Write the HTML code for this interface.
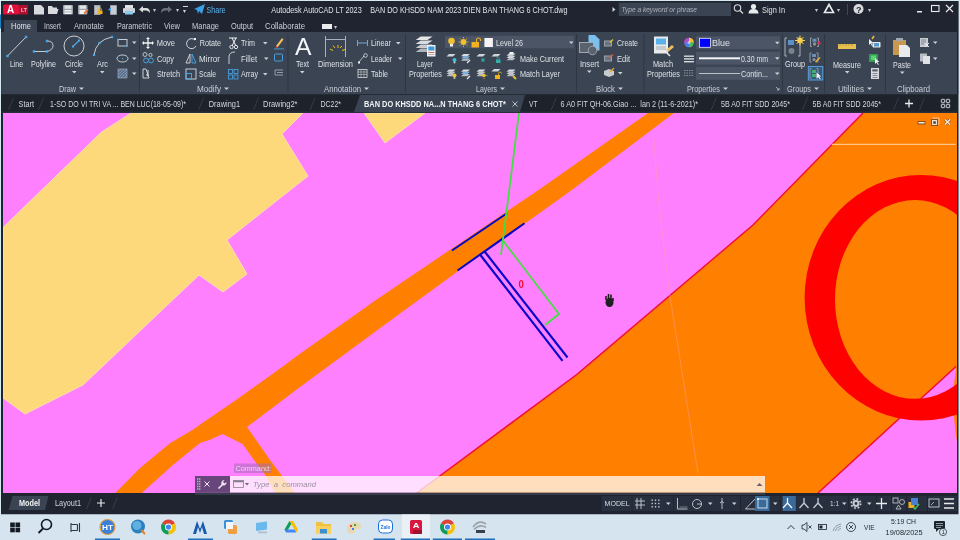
<!DOCTYPE html>
<html><head><meta charset="utf-8"><style>
html,body{margin:0;padding:0;width:960px;height:540px;overflow:hidden;background:#1f2430}
svg{display:block;will-change:transform}
text{font-family:"Liberation Sans",sans-serif;white-space:pre}
</style></head><body>
<svg width="960" height="540" viewBox="0 0 960 540">
<rect x="0" y="0" width="960" height="540" fill="#d6eaf0" />
<rect x="1" y="1" width="957.5" height="513.5" fill="#1f2430" />
<rect x="0" y="14.5" width="1.2" height="14" fill="#1a7fc0" />
<rect x="1.2" y="1" width="957" height="31" fill="#1f2430" />
<rect x="1.2" y="32" width="956" height="62.5" fill="#3b4453" />
<rect x="1.2" y="94.5" width="956" height="18.5" fill="#1d222b" />
<svg x="3" y="113" width="953.5" height="380" viewBox="3 113 953.5 380" overflow="hidden">
<rect x="0" y="100" width="960" height="400" fill="#ff80ff" />
<path d="M863,113 L753,225 L576.8,374.5 L416.8,493 L818,493 L956.5,366 L960,366 L960,113 Z" fill="#ff8000" />
<path d="M863,113 L753,225 L576.8,374.5 L416.8,493 M818,493 L956.5,366" fill="none" stroke="#f01030" stroke-width="1.5" />
<path d="M957,362 Q950,400 957,442 Z" fill="#ff8000" />
<path d="M804.6,297.75 A116.4,122.75 0 1 0 1037.4,297.75 A116.4,122.75 0 1 0 804.6,297.75 Z M835,299.4 A80,99.4 0 1 0 995,299.4 A80,99.4 0 1 0 835,299.4 Z" fill="#ff0000" fill-rule="evenodd"/>
<path d="M131,113 L303,113 L282,134 L308,176 L227,240 L247,274 L223,292 L199,275 L83,385 L25,414 L3,398 L3,227.5 L101,132.5 Z" fill="#fdd97b" stroke="#ffe8b0" stroke-width="0.8" />
<path d="M364,113 L425,113 L385,143 Z" fill="#fdd97b" stroke="#ffe8b0" stroke-width="0.8" />
<path d="M648,113 L674,113 L572.5,189.6 L460,269.8 L400,313.5 L300,387 L247,427 L270,460 L295,493 L275,493 L266,476 L254,460 L242.5,444 L222.5,434 L210,439.7 L200,443 L172.9,465 L141.8,493 L115.3,493 L140,468 L170.3,443 L192.3,430 L210,417.8 L236,400 L280,368.5 L300,353.7 L375.9,300 L435,260 L540,189 Z" fill="#ff8000" />
<path d="M653.3,133 L658.5,200 L669,290 L698,473" fill="none" stroke="#ffa0a0" stroke-width="1" opacity="0.45"/>
<path d="M452,250.5 L507,213.25 M457.5,270.5 L524.5,223.25 M480,254.5 L562.5,360.8 M485,252 L567.5,357.5" fill="none" stroke="#0808c8" stroke-width="2.1" />
<path d="M519,113 L501,255 M502.5,240 L559,314 L545,325" fill="none" stroke="#40e040" stroke-width="1.8" />
<text x="518.50" y="288.10" font-size="10" fill="#f01030" font-weight="bold" textLength="5.30" lengthAdjust="spacingAndGlyphs">0</text>
</svg>
<rect x="3" y="4.5" width="16" height="10" fill="#e0103c" rx="1.5"/>
<rect x="19" y="5" width="9" height="9.5" fill="#b0102e" />
<text x="7.00" y="13.30" font-size="10" fill="#ffffff" font-weight="bold">A</text>
<text x="21.00" y="11.50" font-size="5" fill="#f0c0c8" font-weight="bold">LT</text>
<path d="M34,5 h7 l3,3 v6.5 h-10 z" fill="#d8dadd" />
<path d="M48,6 h4 l1,1.5 h4 v2 h-9 z M48,9 h10.5 l-1.5,5 h-9 z" fill="#d8dadd" />
<rect x="63" y="5" width="10" height="9.5" fill="#9aa0a8" rx="1"/>
<rect x="64.5" y="5.5" width="7" height="3.3" fill="#e0e2e5" />
<rect x="64.5" y="10" width="7" height="4" fill="#f0f2f4" />
<rect x="65" y="11.5" width="6" height="0.8" fill="#9aa0a8" />
<rect x="78" y="5" width="9.5" height="9.5" fill="#9aa0a8" rx="1"/>
<rect x="79.5" y="5.5" width="6.5" height="3.3" fill="#e0e2e5" />
<rect x="79.5" y="10" width="6" height="4" fill="#f0f2f4" />
<path d="M84,13.5 l4,-4" fill="none" stroke="#f07030" stroke-width="1.6" />
<rect x="94" y="5" width="6.5" height="10" fill="#9aa0a8" />
<rect x="95" y="6" width="4.5" height="8" fill="#c0c4ca" />
<rect x="97.5" y="10.5" width="5" height="3.5" fill="#f0b020" />
<path d="M98.5,10.5 v-1 a1.5,1.5 0 0 1 3,0 v1" fill="none" stroke="#f0b020" stroke-width="0.8" />
<rect x="110" y="5" width="7" height="10" fill="#9aa0a8" rx="1"/>
<rect x="111" y="6" width="5" height="8" fill="#c8ccd2" />
<path d="M108,9.5 l3,-2 v4 z" fill="#4aa0e0" />
<rect x="125" y="5" width="8" height="3" fill="#e0e2e5" />
<rect x="123" y="8" width="12" height="5" fill="#d0d4d8" rx="1"/>
<rect x="125" y="11" width="8" height="3.5" fill="#8ac8f0" />
<path d="M139,9.5 l4,-3.5 v2 h3 q4,0 4,5 q-1.5,-2.5 -4,-2.5 h-3 v2 z" fill="#d8dadd" />
<text x="153.00" y="11.66" font-size="6" fill="#c0c4ca">▾</text>
<path d="M172,9.5 l-4,-3.5 v2 h-3 q-4,0 -4,5 q1.5,-2.5 4,-2.5 h3 v2 z" fill="#6a707a" />
<text x="176.00" y="11.66" font-size="6" fill="#c0c4ca">▾</text>
<rect x="183" y="6" width="5" height="1" fill="#d0d4d8" />
<text x="183.00" y="12.66" font-size="6" fill="#d0d4d8">▾</text>
<path d="M194,9 l11,-5 l-3,10 l-3,-3 l-1,3 l-1,-4 z" fill="#3aa0e8" />
<text x="206.50" y="12.54" font-size="9" fill="#5ab4f0" textLength="19.00" lengthAdjust="spacingAndGlyphs">Share</text>
<text x="271.30" y="12.54" font-size="9" fill="#dfe3e8" textLength="90.40" lengthAdjust="spacingAndGlyphs">Autodesk AutoCAD LT 2023</text>
<text x="370.30" y="12.54" font-size="9" fill="#dfe3e8" textLength="197.20" lengthAdjust="spacingAndGlyphs">BAN DO KHSDD NAM 2023 DIEN BAN THANG 6 CHOT.dwg</text>
<path d="M612.5,7 l3,2.5 l-3,2.5 z" fill="#d0d4d8" />
<rect x="618.8" y="2.6" width="112.2" height="13.4" fill="#3b4453" />
<text x="621.50" y="12.00" font-size="7.5" fill="#aeb4bc" font-style="italic" textLength="75.50" lengthAdjust="spacingAndGlyphs">Type a keyword or phrase</text>
<circle cx="737.5" cy="8" r="3.2" fill="none" stroke="#d8dadd" stroke-width="1.1"/>
<path d="M740,10.5 l3,3" fill="none" stroke="#d8dadd" stroke-width="1.2" />
<circle cx="753.5" cy="6.5" r="2.6" fill="#e8eaec"/>
<path d="M748.5,13.5 q0,-4.5 5,-4.5 q5,0 5,4.5 z" fill="#e8eaec" />
<text x="762.00" y="12.74" font-size="9" fill="#dfe3e8" textLength="23.00" lengthAdjust="spacingAndGlyphs">Sign In</text>
<text x="814.50" y="11.66" font-size="6" fill="#c0c4ca">▾</text>
<path d="M829,4.5 l-4.5,8 h9 z" fill="none" stroke="#e8eaec" stroke-width="1.6" />
<text x="837.00" y="11.66" font-size="6" fill="#c0c4ca">▾</text>
<rect x="847" y="4" width="0.8" height="11" fill="#4a5260" />
<circle cx="858.5" cy="9" r="5" fill="#d8dadd"/>
<text x="856.00" y="12.54" font-size="9" fill="#1f2430" font-weight="bold">?</text>
<text x="868.00" y="11.66" font-size="6" fill="#c0c4ca">▾</text>
<rect x="917" y="11" width="5" height="1.5" fill="#e8eaec" />
<rect x="931.5" y="5.5" width="7.5" height="6" fill="none" stroke="#e8eaec" stroke-width="1.1"/>
<path d="M946,5 l7,7 M953,5 l-7,7" fill="none" stroke="#e8eaec" stroke-width="1.2" />
<rect x="4" y="20" width="33" height="12" fill="#3b4453" />
<text x="11.00" y="29.44" font-size="9" fill="#dfe3e8" textLength="20.00" lengthAdjust="spacingAndGlyphs">Home</text>
<text x="44.00" y="29.44" font-size="9" fill="#c9ced6" textLength="17.00" lengthAdjust="spacingAndGlyphs">Insert</text>
<text x="74.00" y="29.44" font-size="9" fill="#c9ced6" textLength="30.00" lengthAdjust="spacingAndGlyphs">Annotate</text>
<text x="117.00" y="29.44" font-size="9" fill="#c9ced6" textLength="35.00" lengthAdjust="spacingAndGlyphs">Parametric</text>
<text x="164.00" y="29.44" font-size="9" fill="#c9ced6" textLength="16.00" lengthAdjust="spacingAndGlyphs">View</text>
<text x="192.00" y="29.44" font-size="9" fill="#c9ced6" textLength="27.00" lengthAdjust="spacingAndGlyphs">Manage</text>
<text x="231.00" y="29.44" font-size="9" fill="#c9ced6" textLength="22.00" lengthAdjust="spacingAndGlyphs">Output</text>
<text x="265.00" y="29.44" font-size="9" fill="#c9ced6" textLength="40.00" lengthAdjust="spacingAndGlyphs">Collaborate</text>
<rect x="322" y="24" width="10" height="5" fill="#e8eaec" />
<text x="334.00" y="28.66" font-size="6" fill="#c0c4ca">▾</text>
<rect x="139" y="34" width="0.9" height="59" fill="#2e3542" />
<rect x="287.5" y="34" width="0.9" height="59" fill="#2e3542" />
<rect x="405" y="34" width="0.9" height="59" fill="#2e3542" />
<rect x="576" y="34" width="0.9" height="59" fill="#2e3542" />
<rect x="643.4" y="34" width="0.9" height="59" fill="#2e3542" />
<rect x="782" y="34" width="0.9" height="59" fill="#2e3542" />
<rect x="824" y="34" width="0.9" height="59" fill="#2e3542" />
<rect x="885" y="34" width="0.9" height="59" fill="#2e3542" />
<rect x="957" y="32" width="1.2" height="62.5" fill="#1f2430" />
<text x="59.00" y="92.24" font-size="9" fill="#c9ced6" textLength="17.00" lengthAdjust="spacingAndGlyphs">Draw</text>
<path d="M79,87.5 h5 l-2.5,2.5 z" fill="#c9ced6" />
<text x="197.00" y="92.24" font-size="9" fill="#c9ced6" textLength="24.00" lengthAdjust="spacingAndGlyphs">Modify</text>
<path d="M224,87.5 h5 l-2.5,2.5 z" fill="#c9ced6" />
<text x="324.00" y="92.24" font-size="9" fill="#c9ced6" textLength="37.00" lengthAdjust="spacingAndGlyphs">Annotation</text>
<path d="M364,87.5 h5 l-2.5,2.5 z" fill="#c9ced6" />
<text x="476.00" y="92.24" font-size="9" fill="#c9ced6" textLength="21.00" lengthAdjust="spacingAndGlyphs">Layers</text>
<path d="M500,87.5 h5 l-2.5,2.5 z" fill="#c9ced6" />
<text x="596.00" y="92.24" font-size="9" fill="#c9ced6" textLength="19.00" lengthAdjust="spacingAndGlyphs">Block</text>
<path d="M618,87.5 h5 l-2.5,2.5 z" fill="#c9ced6" />
<text x="687.00" y="92.24" font-size="9" fill="#c9ced6" textLength="33.00" lengthAdjust="spacingAndGlyphs">Properties</text>
<path d="M723,87.5 h5 l-2.5,2.5 z" fill="#c9ced6" />
<text x="787.00" y="92.24" font-size="9" fill="#c9ced6" textLength="24.00" lengthAdjust="spacingAndGlyphs">Groups</text>
<path d="M814,87.5 h5 l-2.5,2.5 z" fill="#c9ced6" />
<text x="838.00" y="92.24" font-size="9" fill="#c9ced6" textLength="26.00" lengthAdjust="spacingAndGlyphs">Utilities</text>
<path d="M867,87.5 h5 l-2.5,2.5 z" fill="#c9ced6" />
<text x="897.00" y="92.24" font-size="9" fill="#c9ced6" textLength="33.00" lengthAdjust="spacingAndGlyphs">Clipboard</text>
<path d="M776,87 l3,3 M779,88 v2 h-2" fill="none" stroke="#c0c4ca" stroke-width="0.8" />
<path d="M7.5,56 L26,37" fill="none" stroke="#d8dcdf" stroke-width="0.9" />
<rect x="6.3" y="54.8" width="2.4" height="2.4" fill="#4aa8e8" />
<rect x="24.8" y="35.8" width="2.4" height="2.4" fill="#4aa8e8" />
<text x="10.00" y="67.24" font-size="9" fill="#dde1e6" textLength="13.00" lengthAdjust="spacingAndGlyphs">Line</text>
<path d="M34,51.5 H47 Q53,50 53,45.5 Q53,41 47,41" fill="none" stroke="#d8dcdf" stroke-width="0.9" />
<rect x="32.8" y="50.3" width="2.4" height="2.4" fill="#4aa8e8" />
<rect x="45.8" y="50.3" width="2.4" height="2.4" fill="#4aa8e8" />
<rect x="45.8" y="39.8" width="2.4" height="2.4" fill="#4aa8e8" />
<text x="31.00" y="67.24" font-size="9" fill="#dde1e6" textLength="25.00" lengthAdjust="spacingAndGlyphs">Polyline</text>
<circle cx="74" cy="46" r="10" fill="none" stroke="#d8dcdf" stroke-width="0.9"/>
<path d="M73,46.5 L79,40.5" fill="none" stroke="#4aa8e8" stroke-width="1.1" />
<rect x="72" y="45.5" width="2" height="2" fill="#4aa8e8" />
<rect x="78" y="39.5" width="2" height="2" fill="#4aa8e8" />
<text x="65.00" y="67.24" font-size="9" fill="#dde1e6" textLength="18.00" lengthAdjust="spacingAndGlyphs">Circle</text>
<path d="M72,71 h4.5 l-2.25,2.5 z" fill="#d0d4da" />
<path d="M94,55 Q96,40 112,37" fill="none" stroke="#d8dcdf" stroke-width="0.9" />
<rect x="92.9" y="53.9" width="2.2" height="2.2" fill="#4aa8e8" />
<rect x="98.4" y="41.9" width="2.2" height="2.2" fill="#4aa8e8" />
<rect x="110.9" y="35.9" width="2.2" height="2.2" fill="#4aa8e8" />
<text x="97.00" y="67.24" font-size="9" fill="#dde1e6" textLength="11.00" lengthAdjust="spacingAndGlyphs">Arc</text>
<path d="M100,71 h4.5 l-2.25,2.5 z" fill="#d0d4da" />
<rect x="118" y="39.5" width="9" height="6.5" fill="none" stroke="#d8dcdf" stroke-width="0.9"/>
<rect x="117.2" y="38.7" width="1.6" height="1.6" fill="#4aa8e8" />
<rect x="126.2" y="45.2" width="1.6" height="1.6" fill="#4aa8e8" />
<path d="M132,41.5 h4.5 l-2.25,2.5 z" fill="#d0d4da" />
<ellipse cx="122.5" cy="58.5" rx="5.5" ry="3.5" fill="none" stroke="#d8dcdf" stroke-width="0.9"/>
<rect x="122" y="58" width="1.2" height="1.2" fill="#4aa8e8" />
<path d="M132,57.5 h4.5 l-2.25,2.5 z" fill="#d0d4da" />
<rect x="118" y="69" width="9" height="9" fill="#5a7090" stroke="#9aa4b0" stroke-width="0.7"/>
<path d="M118,72 L121,69 M118,75 L124,69 M118,78 L127,69 M121,78 L127,72 M124,78 L127,75" fill="none" stroke="#aab8cc" stroke-width="0.5" />
<path d="M132,72.5 h4.5 l-2.25,2.5 z" fill="#d0d4da" />
<path d="M148,38 V48 M143,43 H153" fill="none" stroke="#f0f2f4" stroke-width="1.3" />
<path d="M148,37 l-2,2 h4 z M148,49 l-2,-2 h4 z M142,43 l2,-2 v4 z M154,43 l-2,-2 v4 z" fill="#f0f2f4" />
<text x="156.70" y="46.24" font-size="9" fill="#dde1e6" textLength="18.30" lengthAdjust="spacingAndGlyphs">Move</text>
<path d="M195,40 A5,5 0 1 0 196,46" fill="none" stroke="#d8dcdf" stroke-width="1" />
<rect x="194" y="38" width="2" height="2" fill="#f0f2f4" />
<text x="199.70" y="46.24" font-size="9" fill="#dde1e6" textLength="21.30" lengthAdjust="spacingAndGlyphs">Rotate</text>
<path d="M229,38 h8 M232,38 l4,8 M236,38 l-4,8" fill="none" stroke="#f0f2f4" stroke-width="1" />
<circle cx="231.5" cy="47" r="1.7" fill="none" stroke="#f0f2f4" stroke-width="0.9"/><circle cx="236" cy="47" r="1.7" fill="none" stroke="#f0f2f4" stroke-width="0.9"/>
<text x="241.00" y="46.24" font-size="9" fill="#dde1e6" textLength="14.00" lengthAdjust="spacingAndGlyphs">Trim</text>
<path d="M263,42 h4.5 l-2.25,2.5 z" fill="#d0d4da" />
<path d="M276,46 l6,-8 l1.5,1.5 l-6,8 z" fill="#f0c060" />
<path d="M276,46 l1.5,1.5 l-2,0.5 z" fill="#e04040" />
<rect x="274" y="48.5" width="10" height="0.8" fill="#4aa8e8" />
<circle cx="145" cy="54.5" r="2" fill="none" stroke="#d8dcdf" stroke-width="0.8"/><circle cx="150.5" cy="55" r="1.6" fill="none" stroke="#d8dcdf" stroke-width="0.8"/>
<circle cx="146" cy="60.5" r="2.4" fill="none" stroke="#4aa8e8" stroke-width="0.9"/><circle cx="151" cy="60.5" r="2.4" fill="none" stroke="#4aa8e8" stroke-width="0.9"/>
<text x="157.00" y="61.74" font-size="9" fill="#dde1e6" textLength="17.00" lengthAdjust="spacingAndGlyphs">Copy</text>
<path d="M186,63 L190,54 V63 Z" fill="none" stroke="#d8dcdf" stroke-width="0.9" />
<path d="M192,54 L196,63 H192 Z" fill="none" stroke="#4aa8e8" stroke-width="0.9" />
<text x="199.00" y="61.74" font-size="9" fill="#dde1e6" textLength="21.00" lengthAdjust="spacingAndGlyphs">Mirror</text>
<path d="M229,64 V57 Q229,52 235,52" fill="none" stroke="#d8dcdf" stroke-width="0.9" />
<text x="241.00" y="61.74" font-size="9" fill="#dde1e6" textLength="16.00" lengthAdjust="spacingAndGlyphs">Fillet</text>
<path d="M264,57.5 h4.5 l-2.25,2.5 z" fill="#d0d4da" />
<rect x="274.5" y="54" width="8" height="7" fill="none" stroke="#4aa8e8" stroke-width="0.9" rx="1"/>
<path d="M143,69 h3 l3,9 h-6 z" fill="none" stroke="#d8dcdf" stroke-width="0.9" />
<path d="M148,70 v6 l-2,-1.5" fill="none" stroke="#f0f2f4" stroke-width="0.9" />
<text x="157.00" y="77.24" font-size="9" fill="#dde1e6" textLength="23.00" lengthAdjust="spacingAndGlyphs">Stretch</text>
<rect x="186" y="69" width="10" height="10" fill="none" stroke="#d8dcdf" stroke-width="0.9"/>
<rect x="186" y="73.5" width="5.5" height="5.5" fill="none" stroke="#4aa8e8" stroke-width="0.9"/>
<text x="199.00" y="77.24" font-size="9" fill="#dde1e6" textLength="17.00" lengthAdjust="spacingAndGlyphs">Scale</text>
<rect x="228.5" y="69.5" width="4" height="4" fill="none" stroke="#4aa8e8" stroke-width="0.8"/>
<rect x="234" y="69.5" width="4" height="4" fill="none" stroke="#4aa8e8" stroke-width="0.8"/>
<rect x="228.5" y="75" width="4" height="4" fill="none" stroke="#4aa8e8" stroke-width="0.8"/>
<rect x="234" y="75" width="4" height="4" fill="none" stroke="#4aa8e8" stroke-width="0.8"/>
<text x="241.00" y="77.24" font-size="9" fill="#dde1e6" textLength="17.00" lengthAdjust="spacingAndGlyphs">Array</text>
<path d="M263,73 h4.5 l-2.25,2.5 z" fill="#d0d4da" />
<path d="M283,70 h-8 v5 h8 M283,72.5 h-6" fill="none" stroke="#9aa8b8" stroke-width="0.9" />
<text x="295.00" y="55.14" font-size="24" fill="#f4f5f6" textLength="16.50" lengthAdjust="spacingAndGlyphs">A</text>
<text x="296.00" y="67.24" font-size="9" fill="#dde1e6" textLength="13.00" lengthAdjust="spacingAndGlyphs">Text</text>
<path d="M300,71 h4.5 l-2.25,2.5 z" fill="#d0d4da" />
<path d="M325.5,36 V57 M345.5,36 V57" fill="none" stroke="#c8ccd2" stroke-width="0.8" />
<path d="M326,39.5 H345" fill="none" stroke="#c8ccd2" stroke-width="0.8" />
<path d="M330,49 l3,1.5 M333,45.5 l2,2.5 M338,45 v3 M342,46 l-2,2 M345,49.5 l-3,1" fill="none" stroke="#f0c020" stroke-width="1" />
<text x="318.00" y="67.24" font-size="9" fill="#dde1e6" textLength="35.00" lengthAdjust="spacingAndGlyphs">Dimension</text>
<path d="M357.5,40 V46 M367.5,40 V46 M357.5,43 H367.5" fill="none" stroke="#7ab0e0" stroke-width="0.9" />
<text x="371.00" y="46.24" font-size="9" fill="#dde1e6" textLength="20.00" lengthAdjust="spacingAndGlyphs">Linear</text>
<path d="M396,42 h4.5 l-2.25,2.5 z" fill="#d0d4da" />
<path d="M359,62 L364,56" fill="none" stroke="#d8dcdf" stroke-width="0.8" />
<circle cx="365.5" cy="55.5" r="1.8" fill="none" stroke="#d8dcdf" stroke-width="0.8"/>
<rect x="358" y="61.5" width="2" height="2" fill="#f0f2f4" />
<text x="371.00" y="61.74" font-size="9" fill="#dde1e6" textLength="21.00" lengthAdjust="spacingAndGlyphs">Leader</text>
<path d="M398,57.5 h4.5 l-2.25,2.5 z" fill="#d0d4da" />
<rect x="358" y="69.5" width="9" height="8" fill="none" stroke="#d8dcdf" stroke-width="0.8"/>
<path d="M358,72 h9 M358,74.5 h9 M361,69.5 v8 M364,69.5 v8" fill="none" stroke="#d8dcdf" stroke-width="0.5" />
<text x="371.00" y="77.24" font-size="9" fill="#dde1e6" textLength="17.00" lengthAdjust="spacingAndGlyphs">Table</text>
<path d="M415.6,52.0 L420.70000000000005,48.5 H432.6 L427.5,52.0 Z" fill="#b0b4ba" />
<path d="M415.6,48.0 L420.70000000000005,44.5 H432.6 L427.5,48.0 Z" fill="#c8ccd2" />
<path d="M415.6,44.0 L420.70000000000005,40.5 H432.6 L427.5,44.0 Z" fill="#d8dbe0" />
<path d="M415.6,40.0 L420.70000000000005,36.5 H432.6 L427.5,40.0 Z" fill="#e4e6e8" />
<rect x="427" y="45" width="8.5" height="11.5" fill="#eef0f2" />
<rect x="428.3" y="46.5" width="6" height="4" fill="#3a98e0" />
<rect x="428.3" y="52" width="6" height="0.9" fill="#e06040" />
<rect x="428.3" y="54" width="6" height="0.8" fill="#a0a8b0" />
<text x="417.00" y="67.24" font-size="9" fill="#dde1e6" textLength="16.00" lengthAdjust="spacingAndGlyphs">Layer</text>
<text x="409.00" y="77.24" font-size="9" fill="#dde1e6" textLength="33.00" lengthAdjust="spacingAndGlyphs">Properties</text>
<rect x="445" y="35.8" width="129" height="12.5" fill="#4b5566" />
<circle cx="451.5" cy="41" r="3.3" fill="#f0c030"/>
<rect x="450" y="44" width="3" height="2.5" fill="#f0f0f0" />
<circle cx="463.5" cy="42" r="3" fill="#f0c030"/>
<path d="M463.5,37 v1.3 M463.5,45.7 v1.3 M458.5,42 h1.3 M467.2,42 h1.3 M460,38.5 l0.9,0.9 M466.1,44.6 l0.9,0.9 M467,38.5 l-0.9,0.9 M460.9,44.6 l-0.9,0.9" fill="none" stroke="#f0c030" stroke-width="0.9" />
<rect x="471.5" y="42" width="7.5" height="5.5" fill="#f0b020" />
<path d="M476.5,42 v-2 a2,2 0 0 1 4,0 v1" fill="none" stroke="#f0b020" stroke-width="1.1" />
<rect x="484.4" y="38" width="8.5" height="9" fill="#f4f4f4" />
<text x="496.00" y="45.74" font-size="9" fill="#dde1e6" textLength="27.00" lengthAdjust="spacingAndGlyphs">Level 26</text>
<path d="M569,41.5 h4.5 l-2.25,2.5 z" fill="#d0d4da" />
<path d="M446.5,56.5 L449.0,54 H455.5 L453.0,56.5 Z" fill="#d0d4d8" />
<circle cx="454.5" cy="60" r="2" fill="#40c0d8"/>
<rect x="453.7" y="61.8" width="1.6" height="1.5" fill="#e0e0e0" />
<path d="M461,60.7 L463.5,58.5 H470 L467.5,60.7 Z" fill="#b8bcc2" />
<path d="M461,58.5 L463.5,56.3 H470 L467.5,58.5 Z" fill="#7ab0e0" />
<path d="M461,56.300000000000004 L463.5,54.1 H470 L467.5,56.300000000000004 Z" fill="#d8dbe0" />
<path d="M467,63 l3,-3" fill="none" stroke="#e8eaec" stroke-width="1.2" />
<path d="M476.5,56.5 L479.0,54 H485.5 L483.0,56.5 Z" fill="#d0d4d8" />
<path d="M483,58 v4 M481,60 h4 M481.5,58.5 l3,3 M484.5,58.5 l-3,3" fill="none" stroke="#30b0a8" stroke-width="0.8" />
<path d="M491.5,56.5 L494.0,54 H500.5 L498.0,56.5 Z" fill="#d0d4d8" />
<rect x="496" y="59.5" width="4.5" height="3.5" fill="#30b0a8" />
<path d="M497,59.5 v-1 a1.2,1.2 0 0 1 2.5,0 v1" fill="none" stroke="#30b0a8" stroke-width="0.7" />
<path d="M506.5,60.2 L509.0,58.0 H515.5 L513.0,60.2 Z" fill="#b8bcc2" />
<path d="M506.5,58.0 L509.0,55.8 H515.5 L513.0,58.0 Z" fill="#d0d4d8" />
<path d="M506.5,55.800000000000004 L509.0,53.6 H515.5 L513.0,55.800000000000004 Z" fill="#d8dbe0" />
<rect x="509.5" y="52" width="4" height="2" fill="#f0f2f4" />
<text x="520.00" y="61.74" font-size="9" fill="#dde1e6" textLength="44.00" lengthAdjust="spacingAndGlyphs">Make Current</text>
<path d="M446.5,76.2 L449.0,74.0 H455.5 L453.0,76.2 Z" fill="#b8bcc2" />
<path d="M446.5,74.0 L449.0,71.8 H455.5 L453.0,74.0 Z" fill="#c0c4ca" />
<path d="M446.5,71.8 L449.0,69.6 H455.5 L453.0,71.8 Z" fill="#d8dbe0" />
<circle cx="454.5" cy="75.5" r="2" fill="#f0c030"/>
<rect x="453.7" y="77.3" width="1.6" height="1.5" fill="#e0e0e0" />
<path d="M461,76.2 L463.5,74.0 H470 L467.5,76.2 Z" fill="#b8bcc2" />
<path d="M461,74.0 L463.5,71.8 H470 L467.5,74.0 Z" fill="#7ab0e0" />
<path d="M461,71.8 L463.5,69.6 H470 L467.5,71.8 Z" fill="#d8dbe0" />
<path d="M467,79 l3,-3" fill="none" stroke="#e8eaec" stroke-width="1.2" />
<path d="M476.5,76.2 L479.0,74.0 H485.5 L483.0,76.2 Z" fill="#b8bcc2" />
<path d="M476.5,74.0 L479.0,71.8 H485.5 L483.0,74.0 Z" fill="#c0c4ca" />
<path d="M476.5,71.8 L479.0,69.6 H485.5 L483.0,71.8 Z" fill="#d8dbe0" />
<circle cx="484" cy="75.5" r="1.8" fill="#f0c030"/>
<path d="M484,72 v1 M484,78 v1 M480.5,75.5 h1 M486.5,75.5 h1" fill="none" stroke="#f0c030" stroke-width="0.7" />
<path d="M491.5,71.5 L494.0,69 H500.5 L498.0,71.5 Z" fill="#d0d4d8" />
<rect x="495" y="75" width="5" height="4" fill="#f0b020" />
<path d="M498.5,75 v-1.5 a1.5,1.5 0 0 1 3,0" fill="none" stroke="#f0b020" stroke-width="0.8" />
<path d="M506.5,76.2 L509.0,74.0 H515.5 L513.0,76.2 Z" fill="#b8bcc2" />
<path d="M506.5,74.0 L509.0,71.8 H515.5 L513.0,74.0 Z" fill="#c0c4ca" />
<path d="M506.5,71.8 L509.0,69.6 H515.5 L513.0,71.8 Z" fill="#d8dbe0" />
<path d="M513,76 l3,3" fill="none" stroke="#f0c030" stroke-width="1.8" />
<text x="520.00" y="77.24" font-size="9" fill="#dde1e6" textLength="40.00" lengthAdjust="spacingAndGlyphs">Match Layer</text>
<path d="M588.5,35 h6.5 l4.5,4.5 v11 h-11 z" fill="#7cc0f0" />
<rect x="579.5" y="42.5" width="14" height="10" fill="#5a626e" stroke="#a8b0b8" stroke-width="0.9"/>
<circle cx="592.5" cy="50.5" r="4.3" fill="#5a626e" stroke="#a0a8b0" stroke-width="0.9"/>
<text x="580.00" y="66.74" font-size="9" fill="#dde1e6" textLength="19.00" lengthAdjust="spacingAndGlyphs">Insert</text>
<path d="M587,70.5 h4.5 l-2.25,2.5 z" fill="#d0d4da" />
<rect x="604" y="40.5" width="8" height="6" fill="#9aa2ae" />
<rect x="605" y="41.5" width="6" height="4" fill="#6a727e" />
<path d="M610,42.5 l3,-3" fill="none" stroke="#f0c030" stroke-width="1.2" />
<text x="617.00" y="46.24" font-size="9" fill="#dde1e6" textLength="21.00" lengthAdjust="spacingAndGlyphs">Create</text>
<rect x="604" y="55.5" width="8" height="6" fill="#9aa2ae" />
<rect x="605" y="56.5" width="6" height="4" fill="#6a727e" />
<path d="M610,57.5 l3,-3" fill="none" stroke="#e06040" stroke-width="1.2" />
<text x="617.00" y="61.74" font-size="9" fill="#dde1e6" textLength="13.00" lengthAdjust="spacingAndGlyphs">Edit</text>
<path d="M604,71 l5,-2 l5,2 v4 l-5,2 l-5,-2 z" fill="#c8ccd2" />
<path d="M610,72 l4,-4" fill="none" stroke="#f0a020" stroke-width="1.3" />
<path d="M618,72 h4.5 l-2.25,2.5 z" fill="#d0d4da" />
<rect x="654" y="36.5" width="14" height="17" fill="#e8eaec" />
<rect x="656" y="38.5" width="10" height="6" fill="#5ab0e8" />
<rect x="656" y="46.5" width="10" height="1" fill="#a0a8b0" />
<rect x="656" y="48.5" width="10" height="1" fill="#a0a8b0" />
<path d="M666,50 l6,-5 l2,2 l-6,5 z" fill="#f0c060" />
<path d="M667,53 l3,3" fill="none" stroke="#e8eaec" stroke-width="1.5" />
<text x="653.00" y="67.24" font-size="9" fill="#dde1e6" textLength="20.00" lengthAdjust="spacingAndGlyphs">Match</text>
<text x="647.00" y="77.24" font-size="9" fill="#dde1e6" textLength="33.00" lengthAdjust="spacingAndGlyphs">Properties</text>
<circle cx="689" cy="42.5" r="4.8" fill="#e84060"/>
<path d="M689,42.5 L689,37.7 A4.8,4.8 0 0 1 693.8,42.5 Z" fill="#f0c030" />
<path d="M689,42.5 L693.8,42.5 A4.8,4.8 0 0 1 689,47.3 Z" fill="#40c060" />
<path d="M689,42.5 L689,47.3 A4.8,4.8 0 0 1 684.2,42.5 Z" fill="#4080f0" />
<path d="M689,42.5 L684.2,42.5 A4.8,4.8 0 0 1 689,37.7 Z" fill="#a050d0" />
<circle cx="689" cy="42.5" r="1.5" fill="#f0f0f0" opacity="0.6"/>
<rect x="696" y="36.3" width="84" height="12.8" fill="#4b5566" />
<path d="M775,41.8 h4.5 l-2.25,2.5 z" fill="#d0d4da" />
<rect x="696" y="51.8" width="84" height="12.8" fill="#4b5566" />
<path d="M775,57.3 h4.5 l-2.25,2.5 z" fill="#d0d4da" />
<rect x="696" y="67" width="84" height="12.8" fill="#4b5566" />
<path d="M775,72.5 h4.5 l-2.25,2.5 z" fill="#d0d4da" />
<rect x="699.5" y="38.3" width="11" height="9" fill="#0000ff" stroke="#e8e8ff" stroke-width="0.8"/>
<text x="712.00" y="45.94" font-size="9" fill="#dde1e6" textLength="18.00" lengthAdjust="spacingAndGlyphs">Blue</text>
<rect x="684" y="55.5" width="10" height="1.4" fill="#d8dcdf" />
<rect x="684" y="58.2" width="10" height="1.4" fill="#d8dcdf" />
<rect x="684" y="61" width="10" height="1.4" fill="#d8dcdf" />
<rect x="699" y="57.3" width="41" height="2" fill="#f4f4f4" />
<text x="741.00" y="61.74" font-size="9" fill="#dde1e6" textLength="27.00" lengthAdjust="spacingAndGlyphs">0.30 mm</text>
<path d="M684,70.5 h10 M684,73 h10 M684,75.5 h10" fill="none" stroke="#9aa2ae" stroke-width="0.8" stroke-dasharray="1.5,1"/>
<rect x="699" y="73" width="41" height="0.8" fill="#d8dcdf" />
<text x="741.00" y="77.24" font-size="9" fill="#dde1e6" textLength="27.00" lengthAdjust="spacingAndGlyphs">Contin...</text>
<path d="M787,38 h-2 v18 h2 M798,38 h2 v18 h-2" fill="none" stroke="#c8ccd2" stroke-width="0.8" />
<rect x="788" y="40" width="6" height="5" fill="#5a90c8" />
<circle cx="791.5" cy="51" r="3" fill="#7a828e"/>
<circle cx="800" cy="40.5" r="2.8" fill="#f8d050"/>
<path d="M800,35.5 v10 M795,40.5 h10 M796.5,37 l7,7 M803.5,37 l-7,7" fill="none" stroke="#f8d050" stroke-width="1" />
<text x="785.00" y="67.24" font-size="9" fill="#dde1e6" textLength="20.00" lengthAdjust="spacingAndGlyphs">Group</text>
<path d="M812.0,38 H810.5 V46.5 H812.0 M817.0,38 H818.5 V46.5 H817.0" fill="none" stroke="#a8b0b8" stroke-width="0.8" />
<rect x="812.5" y="38.8" width="4" height="3" fill="#6a90b8" />
<circle cx="814.5" cy="44" r="1.7" fill="#8a929c"/>
<circle cx="818.8" cy="43" r="1.8" fill="#e03050"/>
<path d="M811.5,53 H810 V62 H811.5 M816.5,53 H818 V62 H816.5" fill="none" stroke="#a8b0b8" stroke-width="0.8" />
<rect x="812" y="54" width="4" height="3" fill="#6a90b8" />
<circle cx="814" cy="59.5" r="1.6" fill="#8a929c"/>
<path d="M815.5,62 l4.5,-4.5" fill="none" stroke="#f0b030" stroke-width="1.5" />
<rect x="808.3" y="66.5" width="14.5" height="13.5" fill="#3a5a7a" stroke="#58a8e8" stroke-width="0.9"/>
<path d="M811.5,68.5 H810 V78 H811.5 M816.5,68.5 H818 V78 H816.5" fill="none" stroke="#a0a8b0" stroke-width="0.8" />
<rect x="812" y="70" width="4" height="3" fill="#40b070" />
<rect x="812" y="74" width="4" height="3" fill="#40b070" />
<path d="M816.5,72.5 v6 l1.5,-1.5 l2,2.5 l0.8,-0.5 l-1.5,-2.5 h2 z" fill="#f0f2f4" />
<rect x="838" y="44" width="18" height="5" fill="#e8c050" />
<path d="M840,44 v2 M843,44 v1.5 M846,44 v2 M849,44 v1.5 M852,44 v2" fill="none" stroke="#8a7030" stroke-width="0.6" />
<text x="833.00" y="67.74" font-size="9" fill="#dde1e6" textLength="28.00" lengthAdjust="spacingAndGlyphs">Measure</text>
<path d="M845,71 h4.5 l-2.25,2.5 z" fill="#d0d4da" />
<rect x="872.5" y="42" width="8" height="5.5" fill="#e8eaec" rx="0.8"/>
<rect x="874" y="43" width="5" height="3.5" fill="#5a98d0" />
<path d="M869,39 l0,6 l1.5,-1.5 l1.5,2.5 l0.8,-0.5 l-1.5,-2.5 h2 z" fill="#f0f2f4" />
<path d="M872,39 l2,-3" fill="none" stroke="#f0c030" stroke-width="1.5" />
<rect x="869" y="54" width="9" height="8" fill="#30a050" />
<rect x="871" y="55.5" width="5" height="4.5" fill="#60d080" />
<path d="M875,58 v6 l1.5,-1.5 l1.5,2.5 l0.8,-0.5 l-1.5,-2.5 h2 z" fill="#f0f2f4" />
<rect x="871" y="68" width="8" height="11" fill="#d8dadd" />
<rect x="872.3" y="69.3" width="5.4" height="2.2" fill="#5a6270" />
<path d="M872.5,73.5 h5 M872.5,75.5 h5 M872.5,77.5 h5" fill="none" stroke="#6a7280" stroke-width="0.8" />
<rect x="893" y="40" width="13" height="15" fill="#c89850" />
<rect x="896" y="38" width="7" height="3" fill="#a0a8b0" />
<path d="M899,45 h8 l3,3 v9 h-11 z" fill="#e8eaec" />
<text x="893.00" y="68.24" font-size="9" fill="#dde1e6" textLength="18.00" lengthAdjust="spacingAndGlyphs">Paste</text>
<path d="M900,71.5 h4.5 l-2.25,2.5 z" fill="#d0d4da" />
<path d="M920,38 h8 v9 h-8 z" fill="#c8ccd2" />
<path d="M921,40 h5 M921,42 h5 M921,44 h3" fill="none" stroke="#4a5260" stroke-width="0.6" />
<path d="M925,43 l4,4 M929,43 l-4,4" fill="none" stroke="#e8eaec" stroke-width="1" />
<path d="M933,41.5 h4.5 l-2.25,2.5 z" fill="#d0d4da" />
<rect x="920" y="53.5" width="7" height="8" fill="#b8bcc4" />
<rect x="923" y="56" width="7" height="8" fill="#e0e2e5" />
<path d="M933,57.5 h4.5 l-2.25,2.5 z" fill="#d0d4da" />
<rect x="1.2" y="111.5" width="956" height="1.5" fill="#2a303b" />
<path d="M13.5,97.5 L8.5,110" fill="none" stroke="#3c434f" stroke-width="0.8" />
<path d="M43.5,97.5 L38.5,110" fill="none" stroke="#3c434f" stroke-width="0.8" />
<path d="M203.5,97.5 L198.5,110" fill="none" stroke="#3c434f" stroke-width="0.8" />
<path d="M258.5,97.5 L253.5,110" fill="none" stroke="#3c434f" stroke-width="0.8" />
<path d="M315.0,97.5 L310.0,110" fill="none" stroke="#3c434f" stroke-width="0.8" />
<path d="M556.25,97.5 L551.25,110" fill="none" stroke="#3c434f" stroke-width="0.8" />
<path d="M716.25,97.5 L711.25,110" fill="none" stroke="#3c434f" stroke-width="0.8" />
<path d="M807.5,97.5 L802.5,110" fill="none" stroke="#3c434f" stroke-width="0.8" />
<path d="M898.5,97.5 L893.5,110" fill="none" stroke="#3c434f" stroke-width="0.8" />
<path d="M924.5,97.5 L919.5,110" fill="none" stroke="#3c434f" stroke-width="0.8" />
<text x="18.50" y="107.24" font-size="9" fill="#d4d8de" textLength="15.50" lengthAdjust="spacingAndGlyphs">Start</text>
<text x="50.00" y="107.24" font-size="9" fill="#d4d8de" textLength="136.00" lengthAdjust="spacingAndGlyphs">1-SO DO VI TRI VA ... BEN LUC(18-05-09)*</text>
<text x="208.75" y="107.24" font-size="9" fill="#d4d8de" textLength="31.25" lengthAdjust="spacingAndGlyphs">Drawing1</text>
<text x="263.00" y="107.24" font-size="9" fill="#d4d8de" textLength="34.50" lengthAdjust="spacingAndGlyphs">Drawing2*</text>
<text x="320.50" y="107.24" font-size="9" fill="#d4d8de" textLength="20.50" lengthAdjust="spacingAndGlyphs">DC22*</text>
<path d="M360,95 L525,95 L520,112 L354,112 Z" fill="#3b4453" />
<text x="364.00" y="107.24" font-size="9" fill="#f2f4f6" font-weight="bold" textLength="142.00" lengthAdjust="spacingAndGlyphs">BAN DO KHSDD NA...N THANG 6 CHOT*</text>
<path d="M512.5,101.5 l5,5 M517.5,101.5 l-5,5" fill="none" stroke="#c8ccd2" stroke-width="0.9" />
<text x="529.00" y="107.24" font-size="9" fill="#d4d8de" textLength="8.50" lengthAdjust="spacingAndGlyphs">VT</text>
<text x="560.50" y="107.24" font-size="9" fill="#d4d8de" textLength="137.50" lengthAdjust="spacingAndGlyphs">6 A0 FIT QH-06.Giao ...  lan 2 (11-6-2021)*</text>
<text x="721.00" y="107.24" font-size="9" fill="#d4d8de" textLength="69.00" lengthAdjust="spacingAndGlyphs">5B A0 FIT SDD 2045*</text>
<text x="812.50" y="107.24" font-size="9" fill="#d4d8de" textLength="68.50" lengthAdjust="spacingAndGlyphs">5B A0 FIT SDD 2045*</text>
<path d="M909,99.5 v8 M905,103.5 h8" fill="none" stroke="#e8eaec" stroke-width="1.3" />
<rect x="941.3" y="99.3" width="3.4" height="3.4" fill="#2a303a" rx="0.5" stroke="#c8ccd2" stroke-width="1"/>
<rect x="946.3" y="99.3" width="3.4" height="3.4" fill="#2a303a" rx="0.5" stroke="#c8ccd2" stroke-width="1"/>
<rect x="941.3" y="104.3" width="3.4" height="3.4" fill="#2a303a" rx="0.5" stroke="#c8ccd2" stroke-width="1"/>
<rect x="946.3" y="104.3" width="3.4" height="3.4" fill="#2a303a" rx="0.5" stroke="#c8ccd2" stroke-width="1"/>
<rect x="1.2" y="493" width="956" height="21" fill="#1f2430" />
<path d="M12.5,496 L48.5,496 L45,510 L8.7,510 Z" fill="#3b4453" />
<text x="19.00" y="506.24" font-size="9" fill="#f2f4f6" font-weight="bold" textLength="21.00" lengthAdjust="spacingAndGlyphs">Model</text>
<text x="55.00" y="506.24" font-size="9" fill="#d4d8de" textLength="26.00" lengthAdjust="spacingAndGlyphs">Layout1</text>
<path d="M91.5,497 L86.5,509" fill="none" stroke="#3c434f" stroke-width="0.8" />
<path d="M117.5,497 L112.5,509" fill="none" stroke="#3c434f" stroke-width="0.8" />
<path d="M101,499 v8 M97,503 h8" fill="none" stroke="#e8eaec" stroke-width="1.2" />
<rect x="601.7" y="496" width="29.899999999999977" height="15" fill="#283040" />
<rect x="632.5" y="496" width="40.5" height="15" fill="#283040" />
<rect x="674" y="496" width="66" height="15" fill="#283040" />
<rect x="741" y="496" width="39" height="15" fill="#283040" />
<rect x="781" y="496" width="67" height="15" fill="#283040" />
<rect x="849" y="496" width="27" height="15" fill="#283040" />
<rect x="877" y="496" width="14" height="15" fill="#283040" />
<rect x="892" y="496" width="14" height="15" fill="#283040" />
<rect x="907" y="496" width="20" height="15" fill="#283040" />
<rect x="928" y="496" width="29" height="15" fill="#283040" />
<text x="604.60" y="506.20" font-size="7.5" fill="#d8dce2" textLength="25.10" lengthAdjust="spacingAndGlyphs">MODEL</text>
<path d="M637,498 v11 M641,498 v11 M635,501 h10 M635,505 h10" fill="none" stroke="#c8ccd2" stroke-width="0.9" />
<rect x="651.5" y="499.5" width="1.4" height="1.4" fill="#c8ccd2" />
<rect x="651.5" y="502.8" width="1.4" height="1.4" fill="#c8ccd2" />
<rect x="651.5" y="506.1" width="1.4" height="1.4" fill="#c8ccd2" />
<rect x="654.8" y="499.5" width="1.4" height="1.4" fill="#c8ccd2" />
<rect x="654.8" y="502.8" width="1.4" height="1.4" fill="#c8ccd2" />
<rect x="654.8" y="506.1" width="1.4" height="1.4" fill="#c8ccd2" />
<rect x="658.1" y="499.5" width="1.4" height="1.4" fill="#c8ccd2" />
<rect x="658.1" y="502.8" width="1.4" height="1.4" fill="#c8ccd2" />
<rect x="658.1" y="506.1" width="1.4" height="1.4" fill="#c8ccd2" />
<path d="M666,502.5 h4.5 l-2.25,2.5 z" fill="#d0d4da" />
<path d="M677.5,498 V509 H687.5" fill="none" stroke="#c8ccd2" stroke-width="0.9" />
<path d="M679.5,507 h8" fill="none" stroke="#c8ccd2" stroke-width="0.5" />
<circle cx="697" cy="504" r="4.5" fill="none" stroke="#c8ccd2" stroke-width="0.9"/>
<path d="M697,504 h5" fill="none" stroke="#c8ccd2" stroke-width="0.9" />
<path d="M708,502.5 h4.5 l-2.25,2.5 z" fill="#d0d4da" />
<path d="M722,498 v11 M720,503 l2,-1.5 l2,1.5" fill="none" stroke="#c8ccd2" stroke-width="0.9" />
<path d="M732,502.5 h4.5 l-2.25,2.5 z" fill="#d0d4da" />
<path d="M745.5,509 L755,499 M745.5,509 H755" fill="none" stroke="#c8ccd2" stroke-width="0.9" />
<rect x="755" y="496" width="14.5" height="15" fill="#3a6a9a" />
<rect x="758" y="499" width="9" height="9" fill="none" stroke="#d8e8f8" stroke-width="0.9"/>
<rect x="757" y="498" width="2" height="2" fill="#d8e8f8" />
<path d="M773,502.5 h4.5 l-2.25,2.5 z" fill="#d0d4da" />
<rect x="782.7" y="496" width="13.1" height="15" fill="#3a6a9a" />
<path d="M787.5,503 v-5 M787.5,503 l-4.5,5 M787.5,503 l4.5,5" fill="none" stroke="#f4f6f8" stroke-width="1.3" />
<path d="M804,503 v-5 M804,503 l-4.5,5 M804,503 l4.5,5" fill="none" stroke="#c8ccd2" stroke-width="1.3" />
<path d="M818,503 v-5 M818,503 l-4.5,5 M818,503 l4.5,5" fill="none" stroke="#c8ccd2" stroke-width="1.3" />
<text x="830.00" y="506.20" font-size="7.5" fill="#d8dce2" textLength="9.00" lengthAdjust="spacingAndGlyphs">1:1</text>
<path d="M842,502.5 h4.5 l-2.25,2.5 z" fill="#d0d4da" />
<circle cx="856" cy="503.5" r="4.6" fill="none" stroke="#c8ccd2" stroke-width="1.8" stroke-dasharray="1.8,1.8"/><circle cx="856" cy="503.5" r="3.4" fill="#c8ccd2"/>
<circle cx="856" cy="503.5" r="1.4" fill="#283040"/>
<path d="M867,502.5 h4.5 l-2.25,2.5 z" fill="#d0d4da" />
<path d="M881.5,498 v11 M876,503.5 h11" fill="none" stroke="#e8eaec" stroke-width="1.3" />
<rect x="893" y="498" width="5" height="5" fill="none" stroke="#c8ccd2" stroke-width="0.8"/>
<circle cx="902" cy="502" r="2.5" fill="none" stroke="#c8ccd2" stroke-width="0.8"/>
<path d="M896,509 l2.5,-4 l2.5,4 z" fill="none" stroke="#c8ccd2" stroke-width="0.8" />
<rect x="908.5" y="502" width="6" height="6" fill="#f0b020" />
<rect x="911" y="498" width="7" height="7" fill="#4a80d0" />
<path d="M913,507 l2,2 l4,-5" fill="none" stroke="#40c060" stroke-width="1.5" />
<rect x="929" y="499" width="10" height="8" fill="none" stroke="#c8ccd2" stroke-width="0.9"/>
<path d="M931,505 l3,-3" fill="none" stroke="#c8ccd2" stroke-width="0.8" />
<path d="M944,499 h10 M944,503.5 h10 M944,508 h10" fill="none" stroke="#e8eaec" stroke-width="1.3" />
<rect x="0" y="514.5" width="960" height="25.5" fill="#d5e4ee" />
<rect x="10.2" y="522.5" width="4.6" height="4.6" fill="#131a22" />
<rect x="15.5" y="522.5" width="4.6" height="4.6" fill="#131a22" />
<rect x="10.2" y="527.7" width="4.6" height="4.6" fill="#131a22" />
<rect x="15.5" y="527.7" width="4.6" height="4.6" fill="#131a22" />
<circle cx="46.5" cy="524.5" r="5" fill="none" stroke="#131a22" stroke-width="1.6"/>
<path d="M43,528.5 L38.5,533" fill="none" stroke="#131a22" stroke-width="1.8" />
<path d="M71,523 v9 M79.5,523 v9 M71,524.5 h6.5 M71,530.5 h6.5 M77.5,524.5 v6" fill="none" stroke="#303840" stroke-width="1.1" />
<circle cx="107.5" cy="527" r="7.5" fill="#3a7fd8" stroke="#e0a040" stroke-width="1.2"/>
<text x="102.00" y="529.82" font-size="7" fill="#ffffff" font-weight="bold" textLength="11.00" lengthAdjust="spacingAndGlyphs">HT</text>
<rect x="95" y="538.5" width="25" height="1.5" fill="#1c6ec0" />
<circle cx="138" cy="526.5" r="7" fill="#2a80c0"/>
<circle cx="137" cy="525.5" r="4.5" fill="#60b0e0"/>
<path d="M141,530 l4,4" fill="none" stroke="#e08020" stroke-width="2" />
<path d="M168.5,527 L162.005,523.25 A7.5,7.5 0 0 1 174.995,523.25 Z" fill="#db4437" />
<path d="M168.5,527 L174.995,523.25 A7.5,7.5 0 0 1 168.5,534.5 Z" fill="#f4c20d" />
<path d="M168.5,527 L168.5,534.5 A7.5,7.5 0 0 1 162.005,523.25 Z" fill="#0f9d58" />
<circle cx="168.5" cy="527" r="3.525" fill="#ffffff"/><circle cx="168.5" cy="527" r="2.625" fill="#4285f4"/>
<path d="M193,534 l4,-13 l3,8 l3,-8 l4,13 h-3 l-2,-7 l-2,6 l-2,-6 l-2,7 z" fill="#1858b0" />
<rect x="188" y="538.5" width="25" height="1.5" fill="#1c6ec0" />
<rect x="224" y="520" width="9" height="9" fill="#3a90d8" rx="1.5"/>
<rect x="228" y="525" width="9" height="9" fill="#f0a040" rx="1.5"/>
<rect x="226" y="522" width="7" height="7" fill="#f4f6f8" />
<path d="M256,523 l11,-1.5 v8 l-11,1.5 z" fill="#6ab8ec" />
<rect x="258" y="531.5" width="9" height="1.8" fill="#b0c0cc" />
<path d="M289.5,521 l3.5,0 l5,8.5 l-1.8,3 z" fill="#fbbc04" />
<path d="M289.5,521 l-5,8.5 l1.8,3 l5,-8.5 z" fill="#0f9d58" />
<path d="M286.3,532.5 h10 l-1.8,-3 h-10 z" fill="#4285f4" />
<path d="M316,522 h6 l1.5,2 h7.5 v9.5 h-15 z" fill="#f0c040" />
<rect x="316" y="526" width="15" height="7.5" fill="#f8d060" />
<rect x="320" y="529" width="7" height="4.5" fill="#3a90d8" />
<rect x="311.8" y="538.5" width="24.8" height="1.5" fill="#1c6ec0" />
<path d="M347,531 q-1,-8 7,-9 q7,0 7,5 q0,3 -3,2 q-3,-1 -3,3 q0,2 -4,1.5 q-3,-0.5 -4,-2.5 z" fill="#e8d8b0" />
<rect x="350" y="525" width="2" height="2" fill="#e04040" />
<rect x="354" y="524" width="2" height="2" fill="#40a040" />
<rect x="352" y="528" width="2" height="2" fill="#4080f0" />
<rect x="378.5" y="520" width="14" height="13" fill="#ffffff" rx="4" stroke="#1a70e0" stroke-width="1"/>
<text x="380.50" y="528.50" font-size="5" fill="#1a70e0" font-weight="bold" textLength="10.00" lengthAdjust="spacingAndGlyphs">Zalo</text>
<rect x="373.6" y="538.5" width="21.4" height="1.5" fill="#1c6ec0" />
<rect x="402" y="514.5" width="28" height="25.5" fill="#e9f1f6" />
<rect x="410" y="520" width="12" height="14" fill="#d81840" rx="1.5"/>
<rect x="413" y="530" width="9" height="4" fill="#a01030" />
<text x="412.80" y="527.88" font-size="8" fill="#ffffff" font-weight="bold" textLength="6.70" lengthAdjust="spacingAndGlyphs">A</text>
<rect x="400.8" y="538.5" width="29.2" height="1.5" fill="#1c6ec0" />
<path d="M447.5,527 L441.005,523.25 A7.5,7.5 0 0 1 453.995,523.25 Z" fill="#db4437" />
<path d="M447.5,527 L453.995,523.25 A7.5,7.5 0 0 1 447.5,534.5 Z" fill="#f4c20d" />
<path d="M447.5,527 L447.5,534.5 A7.5,7.5 0 0 1 441.005,523.25 Z" fill="#0f9d58" />
<circle cx="447.5" cy="527" r="3.525" fill="#ffffff"/><circle cx="447.5" cy="527" r="2.625" fill="#4285f4"/>
<rect x="432.8" y="538.5" width="29.2" height="1.5" fill="#1c6ec0" />
<path d="M473,527 q6,-8 13,-3 M474,529.5 q6,-6 12,-2" fill="none" stroke="#9aa2aa" stroke-width="1.6" />
<rect x="476" y="530" width="9" height="3" fill="#3a4048" />
<rect x="465" y="538.5" width="30" height="1.5" fill="#1c6ec0" />
<path d="M787.5,529 l3.5,-3.5 l3.5,3.5" fill="none" stroke="#1c242c" stroke-width="0.9" />
<path d="M802,525 h2 l3,-2.5 v9 l-3,-2.5 h-2 z" fill="none" stroke="#1c242c" stroke-width="0.8" />
<path d="M808.5,525.5 l3,3 M811.5,525.5 l-3,3" fill="none" stroke="#1c242c" stroke-width="0.8" />
<rect x="818.5" y="524.5" width="8" height="5" fill="none" stroke="#1c242c" stroke-width="0.8"/>
<rect x="819.5" y="525.5" width="3" height="3" fill="#1c242c" />
<path d="M833,531 q2,-6 8,-7 M835,531 q1.5,-4 6,-5 M837.5,531 q1,-2 3.5,-2.5" fill="none" stroke="#808890" stroke-width="0.8" />
<circle cx="851" cy="527" r="4.5" fill="none" stroke="#1c242c" stroke-width="0.8"/>
<path d="M849,525 l4,4 M853,525 l-4,4" fill="none" stroke="#1c242c" stroke-width="0.8" />
<text x="864.00" y="530.02" font-size="7" fill="#1c242c" textLength="10.60" lengthAdjust="spacingAndGlyphs">VIE</text>
<text x="891.00" y="524.02" font-size="7" fill="#1c242c" textLength="25.00" lengthAdjust="spacingAndGlyphs">5:19 CH</text>
<text x="885.60" y="535.02" font-size="7" fill="#1c242c" textLength="36.90" lengthAdjust="spacingAndGlyphs">19/08/2025</text>
<rect x="934" y="521" width="11" height="8" fill="#1c242c" rx="1"/>
<path d="M936,529 v3 l3,-3 z" fill="#1c242c" />
<path d="M936,523.5 h7 M936,525.5 h7 M936,527.5 h5" fill="none" stroke="#d5e4ee" stroke-width="0.6" />
<circle cx="943" cy="532" r="3.6" fill="#d5e4ee" stroke="#1c242c" stroke-width="0.7"/>
<text x="941.70" y="534.18" font-size="5.5" fill="#1c242c">1</text>
<rect x="195" y="492.5" width="570" height="2.5" fill="#353b48" />
<rect x="195" y="476" width="35" height="16.5" fill="#583f6e" opacity="0.9"/>
<rect x="197.3" y="478.3" width="1" height="1.4" fill="#e8e0ee" />
<rect x="199.3" y="478.3" width="1" height="1.4" fill="#e8e0ee" />
<rect x="197.3" y="480.8" width="1" height="1.4" fill="#e8e0ee" />
<rect x="199.3" y="480.8" width="1" height="1.4" fill="#e8e0ee" />
<rect x="197.3" y="483.3" width="1" height="1.4" fill="#e8e0ee" />
<rect x="199.3" y="483.3" width="1" height="1.4" fill="#e8e0ee" />
<rect x="197.3" y="485.8" width="1" height="1.4" fill="#e8e0ee" />
<rect x="199.3" y="485.8" width="1" height="1.4" fill="#e8e0ee" />
<rect x="197.3" y="488.3" width="1" height="1.4" fill="#e8e0ee" />
<rect x="199.3" y="488.3" width="1" height="1.4" fill="#e8e0ee" />
<path d="M204.5,481.5 l5,5 M209.5,481.5 l-5,5" fill="none" stroke="#f0e8f4" stroke-width="1" />
<path d="M218.5,488.5 L223,484" fill="none" stroke="#f0e8f4" stroke-width="1.6" />
<path d="M222,485 a3,3 0 0 1 2.5,-5 l-1.5,2 l1.5,1.5 l2,-1.5 a3,3 0 0 1 -4.5,3" fill="#f0e8f4" />
<rect x="230" y="476" width="535" height="16.5" fill="#ffffff" opacity="0.74"/>
<rect x="233.5" y="480.5" width="10" height="7" fill="none" stroke="#8a8090" stroke-width="0.8"/>
<rect x="233.5" y="480.5" width="10" height="1.8" fill="#8a8090" />
<path d="M245,483 h4 l-2,2.5 z" fill="#6a6070" />
<text x="253.00" y="486.70" font-size="7.5" fill="#9a90a0" font-style="italic" textLength="63.00" lengthAdjust="spacingAndGlyphs">Type  a  command</text>
<path d="M756.5,486 l3,-3 l3,3 z" fill="#6a6070" />
<rect x="234" y="463.5" width="37.5" height="9.5" fill="#a868b8" opacity="0.55" rx="1"/>
<text x="235.50" y="471.20" font-size="7.5" fill="#e8d8ec" textLength="35.50" lengthAdjust="spacingAndGlyphs">Command:</text>
<rect x="918" y="121.5" width="7" height="2.5" fill="#f8e8d8" stroke="#8a5020" stroke-width="1"/>
<rect x="931.5" y="119.5" width="6" height="6" fill="#f0e0d0" stroke="#8a5020" stroke-width="1"/>
<rect x="933.3" y="121.3" width="2.5" height="2.5" fill="#404040" />
<path d="M933,119 v-1 h6 v6 h-1" fill="none" stroke="#e8d8c8" stroke-width="0.8" />
<path d="M945,119.5 l5,5 M950,119.5 l-5,5" fill="none" stroke="#a06020" stroke-width="2.6" />
<path d="M945,119.5 l5,5 M950,119.5 l-5,5" fill="none" stroke="#f8f0e8" stroke-width="1.2" />
<rect x="831.7" y="143.8" width="124" height="1" fill="#ffd8a8" />
<ellipse cx="609.5" cy="302.5" rx="4" ry="4.5" fill="#202020"/>
<path d="M606,300 v-4 M608.5,299 v-5 M611,299 v-4.5 M613,301 v-3" fill="none" stroke="#202020" stroke-width="1.6" />
</svg></body></html>
